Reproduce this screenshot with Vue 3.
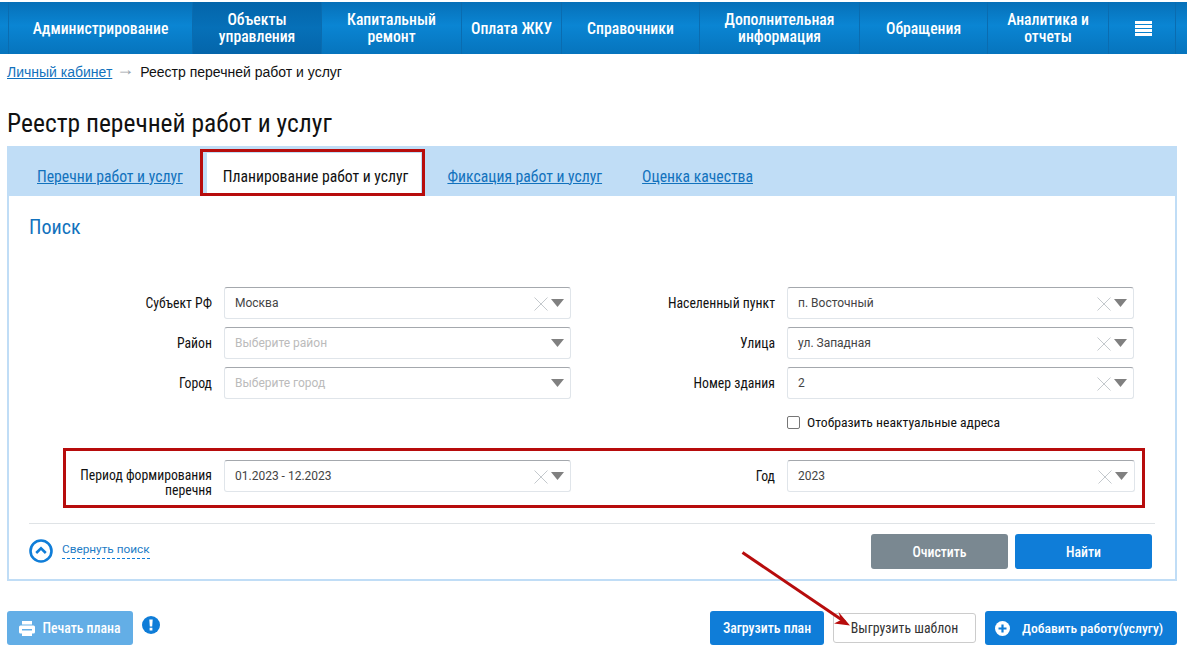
<script setup>
const nav = [
  { t: 'Администрирование', w: 184 },
  { t: 'Объекты управления', w: 129, active: true, narrow: true },
  { t: 'Капитальный ремонт', w: 140, narrow: true },
  { t: 'Оплата ЖКУ', w: 100 },
  { t: 'Справочники', w: 138 },
  { t: 'Дополнительная информация', w: 160, narrow: true },
  { t: 'Обращения', w: 128 },
  { t: 'Аналитика и отчеты', w: 121, narrow: true },
]
const rows = [
  { l: 'Субъект РФ', v: 'Москва', r: 'Населенный пункт', rv: 'п. Восточный' },
  { l: 'Район', p: 'Выберите район', r: 'Улица', rv: 'ул. Западная' },
  { l: 'Город', p: 'Выберите город', r: 'Номер здания', rv: '2' },
]
</script>

<template>
  <div class="page">
    <nav class="nav">
      <a v-for="n in nav" :key="n.t" class="nav-item" :class="{ active: n.active }" :style="{ width: n.w + 'px' }">
        <span class="cond" :class="{ wrap: n.narrow }">{{ n.t }}</span>
      </a>
      <a class="nav-item burger">
        <svg width="17" height="15" viewBox="0 0 17 15"><path d="M0 0h17v3H0zM0 4h17v3H0zM0 8h17v3H0zM0 12h17v3H0z" fill="#fff" /></svg>
      </a>
      <div class="nav-rest"></div>
    </nav>

    <div class="crumbs">
      <a class="crumb-link">Личный кабинет</a>
      <span class="crumb-arrow">→</span>
      <span>Реестр перечней работ и услуг</span>
    </div>

    <h1 class="title">Реестр перечней работ и услуг</h1>

    <section class="card">
      <div class="tabs">
        <a class="tab">Перечни работ и услуг</a>
        <a class="tab current">Планирование работ и услуг<i class="red-box tab-box"></i></a>
        <a class="tab">Фиксация работ и услуг</a>
        <a class="tab">Оценка качества</a>
      </div>
      <div class="body">
        <h2 class="search">Поиск</h2>
        <div class="grid">
          <template v-for="r in rows" :key="r.l">
            <label class="lab">{{ r.l }}</label>
            <div class="sel">
              <span v-if="r.v" class="val">{{ r.v }}</span>
              <span v-else class="ph">{{ r.p }}</span>
              <svg v-if="r.v" class="x" width="14" height="14" viewBox="0 0 14 14"><path d="M.5.5l13 13M13.5.5l-13 13" stroke="#c4c9cd" fill="none" /></svg>
              <svg class="tri" width="13" height="8" viewBox="0 0 13 8"><path d="M0 0h13L6.5 8z" fill="#808080" /></svg>
            </div>
            <label class="lab">{{ r.r }}</label>
            <div class="sel">
              <span class="val">{{ r.rv }}</span>
              <svg class="x" width="14" height="14" viewBox="0 0 14 14"><path d="M.5.5l13 13M13.5.5l-13 13" stroke="#c4c9cd" fill="none" /></svg>
              <svg class="tri" width="13" height="8" viewBox="0 0 13 8"><path d="M0 0h13L6.5 8z" fill="#808080" /></svg>
            </div>
          </template>
        </div>
        <div class="check-row">
          <span class="box"></span>
          <span class="cond-text">Отобразить неактуальные адреса</span>
        </div>
        <div class="grid period">
          <i class="red-box period-box"></i>
          <label class="lab two">Период формирования<br />перечня</label>
          <div class="sel">
            <span class="val">01.2023 - 12.2023</span>
            <svg class="x" width="14" height="14" viewBox="0 0 14 14"><path d="M.5.5l13 13M13.5.5l-13 13" stroke="#c4c9cd" fill="none" /></svg>
            <svg class="tri" width="13" height="8" viewBox="0 0 13 8"><path d="M0 0h13L6.5 8z" fill="#808080" /></svg>
          </div>
          <label class="lab">Год</label>
          <div class="sel wide">
            <span class="val">2023</span>
            <svg class="x" width="14" height="14" viewBox="0 0 14 14"><path d="M.5.5l13 13M13.5.5l-13 13" stroke="#c4c9cd" fill="none" /></svg>
            <svg class="tri" width="13" height="8" viewBox="0 0 13 8"><path d="M0 0h13L6.5 8z" fill="#808080" /></svg>
          </div>
        </div>
        <div class="foot">
          <svg class="up" width="24" height="24" viewBox="0 0 24 24">
            <circle cx="12" cy="12" r="10.5" fill="none" stroke="#0f7dd8" stroke-width="2.6" />
            <path d="M7.2 14L12 9.4l4.8 4.6" fill="none" stroke="#0f7dd8" stroke-width="2.6" />
          </svg>
          <a class="collapse">Свернуть поиск</a>
          <button class="btn gray">Очистить</button>
          <button class="btn blue find">Найти</button>
        </div>
      </div>
    </section>

    <div class="actions">
      <button class="btn print">
        <svg width="16" height="15" viewBox="0 0 16 15"><path d="M3 0h10v3.5H3zM1.5 4.500h13A1.500 1.500 0 0 1 16 6v5a1.500 1.500 0 0 1-1.500 1.500H13V15H3v-2.500H1.500A1.500 1.500 0 0 1 0 11V6a1.500 1.500 0 0 1 1.500-1.500zM3 8v1.500h10V8z" fill="#fff" fill-rule="evenodd" /></svg>
        Печать плана
      </button>
      <svg class="warn" width="18" height="18" viewBox="0 0 18 18">
        <circle cx="9" cy="9" r="9" fill="#0f7dd8" />
        <path d="M7.300 3.500h3.400l-.5 7H7.800zM7.600 11.700h2.800v2.700H7.600z" fill="#fff" />
      </svg>
      <span class="spacer"></span>
      <button class="btn blue upload">Загрузить план</button>
      <button class="btn ghost">Выгрузить шаблон</button>
      <button class="btn blue add">
        <svg width="15" height="15" viewBox="0 0 15 15"><circle cx="7.500" cy="7.500" r="7.500" fill="#fff" /><path d="M6.400 3.500h2.200v2.900h2.900v2.200H8.600v2.900H6.400V8.600H3.500V6.400h2.900z" fill="#0f7dd8" /></svg>
        Добавить работу(услугу)
      </button>
    </div>

    <svg class="arrow" width="120" height="85" viewBox="0 0 120 85">
      <path d="M1.500 1.500L104 71" stroke="#b70c0c" stroke-width="3" fill="none" />
      <path d="M109 74.500L93 72.500l7-3.500-2.500-8z" fill="#b70c0c" />
    </svg>
  </div>
</template>

<style>
html, body { margin: 0; background: #fff; }
</style>

<style scoped>
.page {
  position: relative;
  width: 1187px;
  height: 660px;
  overflow: hidden;
  font-family: "Roboto Condensed", "Liberation Sans Narrow", "Liberation Sans", sans-serif;
  color: #111;
}
.nav {
  display: flex;
  height: 52px;
  margin-top: 0;
  border-top: 2px solid #fff;
  padding-left: 8px;
  background: linear-gradient(#0670b8, #0a85d3 45%, #0674bd);
}
.nav-item {
  box-sizing: border-box;
  display: flex;
  align-items: center;
  justify-content: center;
  border-left: 1px solid #0a6cb0;
  color: #fff;
  font-size: 15.7px;
  font-weight: 500;
  line-height: 17px;
  text-align: center;
}
.nav-item.active { background: linear-gradient(#0465aa, #0670b8 50%, #0465aa); }
.wrap { display: block; width: 116px; }
.burger { width: 68px; border-right: 1px solid #0a6cb0; padding-left: 2px; }
.nav-rest { flex: 1; }
.crumbs {
  display: flex;
  align-items: center;
  height: 18px;
  margin: 9px 0 0 7px;
  font-family: "Liberation Sans", sans-serif;
  font-size: 14px;
}
.crumb-link { color: #1272bd; text-decoration: underline; }
.crumb-arrow { margin: 0 6px 6px 4px; color: #9aa3aa; font-size: 18px; }
.title {
  margin: 25px 0 0 7px;
  height: 40px;
  font-size: 25.500px;
  line-height: 34px;
  font-weight: 400;
}
.card {
  box-sizing: border-box;
  width: 1170px;
  height: 435px;
  margin-left: 7px;
  border: 2px solid #c0ddf6;
  border-top: 0;
}
.tabs {
  display: flex;
  height: 50px;
  margin: 0 -2px;
  background: #c0ddf6;
  font-size: 15.700px;
}
.tab {
  box-sizing: border-box;
  position: relative;
  display: flex;
  align-items: center;
  margin-top: 7px;
  height: 43px;
  color: #1272bd;
  text-decoration: underline;
  padding: 3px 20px 0;
  margin-left: 0;
}
.tab:first-child { margin-left: 10px; }
.tab.current {
  color: #111;
  text-decoration: none;
  background: #fff;
  margin: 7px 6px 0 4px;
  padding: 3px 13px 0 16px;
}
.red-box {
  position: absolute;
  box-sizing: border-box;
  border: 3px solid #b70c0c;
  pointer-events: none;
}
.tab-box { left: -7px; right: -4px; top: -4px; bottom: 0; }
.body { padding: 0 20px; }
.search {
  margin: 19px 0 0;
  height: 72px;
  color: #1272bd;
  font-size: 20px;
  line-height: 24px;
  font-weight: 400;
}
.grid {
  display: grid;
  grid-template-columns: 195px 347px 216px 347px;
  grid-auto-rows: 40px;
}
.lab {
  box-sizing: border-box;
  padding: 0 12px 8px 0;
  display: flex;
  align-items: center;
  justify-content: flex-end;
  text-align: right;
  font-size: 13.750px;
  line-height: 14px;
}
.lab.two { display: block; padding-top: 8px; line-height: 15px; }
.sel {
  box-sizing: border-box;
  position: relative;
  display: flex;
  align-items: center;
  height: 32px;
  padding-left: 10px;
  border: 1px solid #e0e5ea;
  border-top-color: #a4a8ad;
  border-radius: 3px;
  font-family: Roboto, sans-serif;
  font-size: 12px;
}
.sel.wide { width: 348px; }
.val { color: #444; }
.ph { color: #bbb; }
.x { position: absolute; right: 22px; top: 9px; }
.tri { position: absolute; right: 6px; top: 11px; }
.check-row {
  display: flex;
  align-items: center;
  height: 16px;
  margin: 7px 0 0 758px;
  gap: 7px;
}
.box {
  box-sizing: border-box;
  width: 13px;
  height: 13px;
  border: 1px solid #767676;
  border-radius: 2px;
}
.cond-text { font-size: 13.700px; }
.period { position: relative; margin-top: 30px; }
.period-box { left: 34px; top: -12px; height: 60px; width: 1082px; }
.foot {
  display: flex;
  align-items: center;
  margin-top: 23px;
  border-top: 1px solid #dfe3e6;
  padding-top: 10px;
  height: 35px;
}
.up { margin-right: 9px; margin-top: -1px; }
.collapse {
  color: #1d7cc6;
  font-family: Roboto, sans-serif;
  font-size: 11.800px;
  line-height: 14px;
  padding-bottom: 2px;
  border-bottom: 1px dashed #0f7dd8;
  margin-top: -2px;
  margin-right: auto;
}
.btn {
  box-sizing: border-box;
  display: flex;
  align-items: center;
  justify-content: center;
  border: 0;
  border-radius: 3px;
  font-family: inherit;
  font-size: 13.800px;
  font-weight: 500;
  color: #fff;
  padding: 0;
}
.gray { width: 137px; height: 35px; background: #7a8891; margin-right: 7px; }
.blue { background: #0f7dd8; }
.find { width: 137px; height: 35px; margin-right: 3px; }
.actions {
  display: flex;
  align-items: center;
  height: 34px;
  margin: 30px 10px 0 7px;
}
.print { width: 126px; height: 34px; background: #63aee6; gap: 7px; }
.warn { margin: -6px 0 0 9px; }
.spacer { flex: 1; }
.upload { width: 114px; height: 34px; }
.ghost {
  width: 143px;
  height: 30px;
  margin: 0 9px;
  background: #fff;
  border: 1px solid #ccc;
  color: #333;
  font-weight: 400;
}
.add { width: 192px; height: 34px; gap: 12px; justify-content: flex-start; padding-left: 10px; font-size: 13.600px; }
.arrow { position: absolute; left: 741px; top: 551px; }
</style>
